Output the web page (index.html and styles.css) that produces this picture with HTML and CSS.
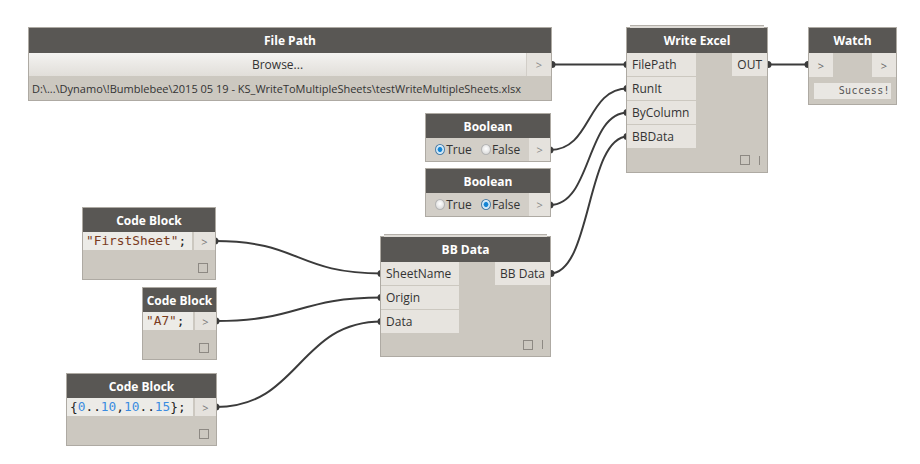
FILE: index.html
```html
<!DOCTYPE html>
<html>
<head>
<meta charset="utf-8">
<link rel="stylesheet" href="styles.css">
</head>
<body>
<div class="canvas">
  <svg class="wires" width="920" height="464" viewBox="0 0 920 464">
    <g fill="none" stroke="#3b3b3b" stroke-width="2">
      <path d="M551,64.5 L628,64.5"/>
      <path d="M550,150 C592,150 586,88.5 628,88.5"/>
      <path d="M550,205 C592,205 586,112.5 628,112.5"/>
      <path d="M550,273.5 C592,273.5 586,136.5 628,136.5"/>
      <path d="M767,64.5 L809,64.5"/>
      <path d="M215,241 C300,241 296,273.5 382,273.5"/>
      <path d="M216,321 C300,321 298,297.5 382,297.5"/>
      <path d="M216,407 C300,407 298,321.5 382,321.5"/>
    </g>
    <g fill="#3b3b3b">
      <circle cx="552" cy="64.5" r="3.5"/><circle cx="627" cy="64.5" r="3.5"/>
      <circle cx="550" cy="150" r="3.5"/><circle cx="627" cy="88.5" r="3.5"/>
      <circle cx="550" cy="205" r="3.5"/><circle cx="627" cy="112.5" r="3.5"/>
      <circle cx="551" cy="273.5" r="3.5"/><circle cx="627" cy="136.5" r="3.5"/>
      <circle cx="768" cy="64.5" r="3.5"/><circle cx="808" cy="64.5" r="3.5"/>
      <circle cx="215" cy="241" r="3.5"/><circle cx="381" cy="273.5" r="3.5"/>
      <circle cx="216" cy="321" r="3.5"/><circle cx="381" cy="297.5" r="3.5"/>
      <circle cx="216" cy="407" r="3.5"/><circle cx="381" cy="321.5" r="3.5"/>
    </g>
  </svg>

  <div class="node n-filepath">
    <div class="head">File Path</div>
    <div class="fp-browse">
      <div class="browse">Browse...</div>
      <div class="outbtn">&gt;</div>
    </div>
    <div class="fp-path">D:\...\Dynamo\!Bumblebee\2015 05 19 - KS_WriteToMultipleSheets\testWriteMultipleSheets.xlsx</div>
  </div>

  <div class="node stacked n-write">
    <div class="head">Write Excel</div>
    <div class="ports">
      <div class="inputs w-in">
        <div class="port">FilePath</div>
        <div class="port">RunIt</div>
        <div class="port">ByColumn</div>
        <div class="port">BBData</div>
      </div>
      <div class="outputs">
        <div class="port out">OUT</div>
      </div>
    </div>
    <div class="foot"><span class="sq"></span><span class="bar"></span></div>
  </div>

  <div class="node n-watch">
    <div class="head">Watch</div>
    <div class="watch-row">
      <div class="wbtn">&gt;</div>
      <div class="wbtn">&gt;</div>
    </div>
    <div class="watch-val">Success!</div>
  </div>

  <div class="node n-bool1">
    <div class="head">Boolean</div>
    <div class="bool-row">
      <span class="radio on"></span><span class="rlabel">True</span>
      <span class="radio"></span><span class="rlabel">False</span>
      <div class="bbtn">&gt;</div>
    </div>
  </div>

  <div class="node n-bool2">
    <div class="head">Boolean</div>
    <div class="bool-row">
      <span class="radio"></span><span class="rlabel">True</span>
      <span class="radio on"></span><span class="rlabel">False</span>
      <div class="bbtn">&gt;</div>
    </div>
  </div>

  <div class="node n-cb1">
    <div class="head">Code Block</div>
    <div class="code-row">
      <div class="code"><span class="str">"FirstSheet"</span>;</div>
      <div class="cbtn">&gt;</div>
    </div>
    <div class="cfoot"><span class="sq"></span></div>
  </div>

  <div class="node n-cb2">
    <div class="head">Code Block</div>
    <div class="code-row">
      <div class="code"><span class="str">"A7"</span>;</div>
      <div class="cbtn">&gt;</div>
    </div>
    <div class="cfoot"><span class="sq"></span></div>
  </div>

  <div class="node n-cb3">
    <div class="head">Code Block</div>
    <div class="code-row">
      <div class="code">{<span class="num">0</span>..<span class="num">10</span>,<span class="num">10</span>..<span class="num">15</span>};</div>
      <div class="cbtn">&gt;</div>
    </div>
    <div class="cfoot"><span class="sq"></span></div>
  </div>

  <div class="node stacked n-bbdata">
    <div class="head">BB Data</div>
    <div class="ports">
      <div class="inputs b-in">
        <div class="port">SheetName</div>
        <div class="port">Origin</div>
        <div class="port">Data</div>
      </div>
      <div class="outputs">
        <div class="port out">BB Data</div>
      </div>
    </div>
    <div class="foot"><span class="sq"></span><span class="bar"></span></div>
  </div>
</div>
</body>
</html>
```

FILE: styles.css
```css
html, body {
  margin: 0;
  padding: 0;
  background: #ffffff;
}

.canvas {
  position: relative;
  width: 920px;
  height: 464px;
  overflow: hidden;
  background: #ffffff;
  font-family: "Open Sans", "DejaVu Sans", sans-serif;
  color: #333333;
}

.wires {
  position: absolute;
  left: 0;
  top: 0;
}

.node {
  position: absolute;
  box-sizing: border-box;
  background: #ccc8c0;
  box-shadow: 0 0 0 1px #aeaaa3;
  display: flex;
  flex-direction: column;
}

.stacked::before {
  content: "";
  position: absolute;
  left: 3px;
  right: 3px;
  top: -3px;
  height: 2px;
  background: #dedbd6;
  border-top: 1px solid #b4b0aa;
}

.head {
  flex: none;
  height: 25px;
  background: #595754;
  color: #ffffff;
  font-weight: bold;
  font-size: 12px;
  display: flex;
  align-items: center;
  justify-content: center;
}

/* File Path */
.n-filepath { left: 29px; top: 28px; width: 522px; height: 72px; }
.fp-browse {
  display: flex;
  height: 23px;
}
.browse {
  flex: 1;
  background: linear-gradient(#f4f3f1, #e1ded9);
  font-size: 12px;
  color: #333;
  display: flex;
  align-items: center;
  justify-content: center;
}
.outbtn {
  width: 24px;
  background: #e5e2dd;
  border-left: 1px solid #d2cec8;
  color: #8a8a8a;
  font-size: 11px;
  display: flex;
  align-items: center;
  justify-content: center;
}
.fp-path {
  height: 24px;
  line-height: 25px;
  padding-left: 3px;
  font-size: 11px;
  color: #333;
  white-space: nowrap;
  overflow: hidden;
}

/* ports */
.ports {
  display: flex;
  justify-content: space-between;
  flex: none;
}
.inputs, .outputs {
  display: flex;
  flex-direction: column;
  gap: 1px;
}
.w-in { width: 69px; }
.b-in { width: 78px; }
.port {
  height: 23px;
  line-height: 23px;
  background: #e7e4df;
  font-size: 12px;
  color: #333;
  padding-left: 5px;
  box-sizing: border-box;
  white-space: nowrap;
}
.port.out {
  padding: 0 5px;
  text-align: right;
}
.foot {
  flex: 1;
  display: flex;
  justify-content: flex-end;
  align-items: center;
  padding-right: 7px;
  gap: 9px;
}
.sq {
  width: 8px;
  height: 8px;
  border: 1px solid #8d8983;
  display: block;
}
.bar {
  width: 1px;
  height: 9px;
  background: #8d8983;
  display: block;
}

/* Write Excel */
.n-write { left: 627px; top: 28px; width: 140px; height: 144px; }

/* BB Data */
.n-bbdata { left: 381px; top: 237px; width: 169px; height: 119px; }

/* Watch */
.n-watch { left: 809px; top: 28px; width: 87px; height: 76px; }
.watch-row {
  display: flex;
  justify-content: space-between;
  height: 24px;
}
.wbtn {
  width: 24px;
  background: #e7e4df;
  color: #666;
  font-size: 11px;
  display: flex;
  align-items: center;
  justify-content: center;
}
.watch-val {
  margin: 6px 5px 0 5px;
  height: 16px;
  background: #e9e7e3;
  font-family: "DejaVu Sans Mono", monospace;
  font-size: 10px;
  letter-spacing: 0.4px;
  color: #555;
  text-align: right;
  line-height: 16px;
  padding-right: 1px;
}

/* Boolean */
.n-bool1 { left: 426px; top: 114px; width: 124px; height: 47px; }
.n-bool2 { left: 426px; top: 169px; width: 124px; height: 47px; }
.n-bool1 .head, .n-bool2 .head { height: 24px; }
.bool-row {
  display: flex;
  align-items: center;
  height: 23px;
  padding-left: 9px;
  background: #d2cec7;
}
.radio {
  width: 9px;
  height: 9px;
  border-radius: 50%;
  border: 1px solid #b4b4b4;
  background: radial-gradient(circle at 50% 40%, #ffffff, #d2d2d2);
  display: block;
}
.radio.on {
  border-color: #4a7ea8;
  background: radial-gradient(circle, #0f7fd0 0, #1c8ad8 35%, #bfe0f6 45%, #e8f3fb 70%);
}
.rlabel {
  font-size: 12px;
  color: #333;
  margin-left: 1px;
  margin-right: 9px;
}
.bbtn {
  margin-left: auto;
  width: 23px;
  height: 23px;
  background: #e5e2dd;
  color: #888;
  font-size: 11px;
  display: flex;
  align-items: center;
  justify-content: center;
}

/* Code blocks */
.n-cb1 { left: 83px; top: 208px; width: 132px; height: 71px; }
.n-cb2 { left: 143px; top: 288px; width: 73px; height: 71px; }
.n-cb3 { left: 67px; top: 374px; width: 149px; height: 71px; }
.n-cb1 .head, .n-cb2 .head, .n-cb3 .head { height: 24px; }
.code-row {
  display: flex;
  height: 18px;
}
.code {
  flex: 1;
  background: #ecebe7;
  font-family: "DejaVu Sans Mono", "Liberation Mono", monospace;
  font-size: 12.8px;
  line-height: 18px;
  padding-left: 3px;
  color: #222;
  white-space: nowrap;
  overflow: hidden;
}
.str { color: #7a3c1e; }
.num { color: #3a8be0; }
.cbtn {
  width: 21px;
  flex: none;
  margin-left: 2px;
  background: #e5e2dd;
  color: #777;
  font-size: 11px;
  display: flex;
  align-items: center;
  justify-content: center;
}
.cfoot {
  flex: 1;
  display: flex;
  justify-content: flex-end;
  align-items: flex-end;
  padding: 0 7px 6px 0;
}
```
